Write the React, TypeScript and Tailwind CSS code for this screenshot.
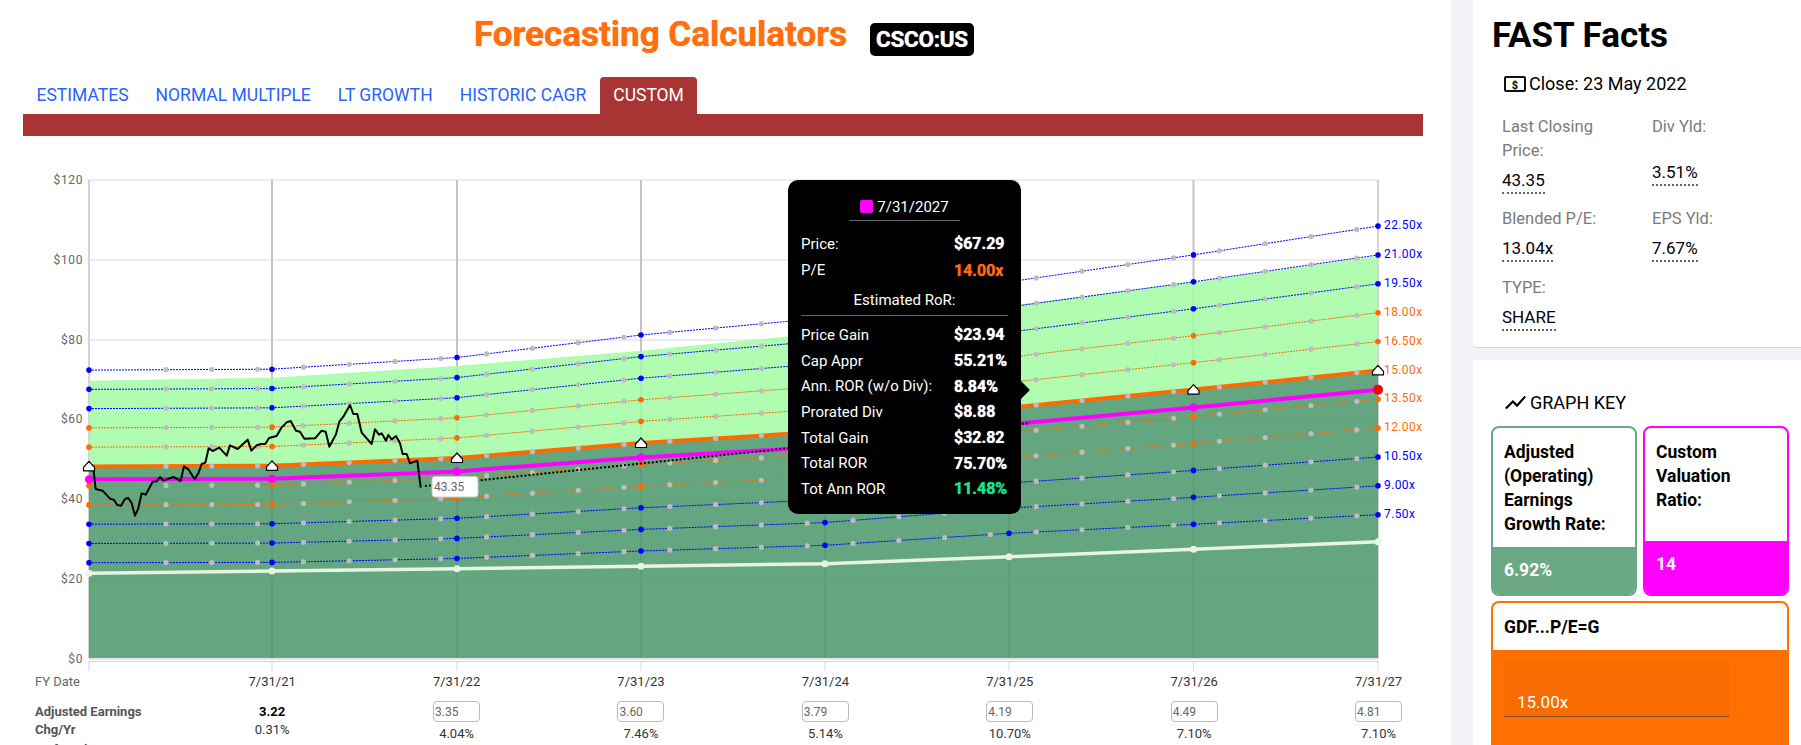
const xs = [89, 272, 457, 641, 825, 1009, 1193.5, 1378];
const eps = [3.21, 3.22, 3.35, 3.6, 3.79, 4.19, 4.49, 4.81];
const dates = ["7/31/21", "7/31/22", "7/31/23", "7/31/24", "7/31/25", "7/31/26", "7/31/27"];
const inputs = ["3.35", "3.60", "3.79", "4.19", "4.49", "4.81"];
const changes = ["4.04%", "7.46%", "5.14%", "10.70%", "7.10%", "7.10%"];
const BASE = 659;

const epsAt = (x: number) => {
  for (let i = 0; i < xs.length - 1; i++) {
    if (x <= xs[i + 1]) {
      return eps[i] + ((x - xs[i]) / (xs[i + 1] - xs[i])) * (eps[i + 1] - eps[i]);
    }
  }
  return eps[eps.length - 1];
};
const yFor = (pe: number, x: number) => BASE - epsAt(x) * pe * 4;
const peLine = (pe: number) => xs.map((x, i) => `${x},${BASE - eps[i] * pe * 4}`).join(" ");

const minor = Array.from({ length: 27 }, (_, i) => 166 + i * 45.8);
const multiples = [
  { pe: 22.5, c: "#0000ff", t: "22.50x" },
  { pe: 21, c: "#0000ff", t: "21.00x" },
  { pe: 19.5, c: "#0000ff", t: "19.50x" },
  { pe: 18, c: "#ff6a00", t: "18.00x" },
  { pe: 16.5, c: "#ff6a00", t: "16.50x" },
  { pe: 13.5, c: "#ff6a00", t: "13.50x" },
  { pe: 12, c: "#ff6a00", t: "12.00x" },
  { pe: 10.5, c: "#0000ff", t: "10.50x" },
  { pe: 9, c: "#0000ff", t: "9.00x" },
  { pe: 7.5, c: "#0000ff", t: "7.50x" },
];

const whiteY = [573.3, 571, 568.7, 566.3, 563.7, 556.7, 549.3, 541.7];
const greenTop = [380.7, 377.7, 366, 350.7, 333, 306, 282, 256];
const priceRaw = [
  100, 385, 107, 447, 128, 452, 150, 476, 162, 480, 172, 495, 183, 497, 195, 477, 205, 474, 215, 490, 225, 527, 235, 505,
  245, 460, 257, 464, 278, 425, 290, 424, 300, 411, 310, 422, 340, 411, 362, 423, 372, 379, 385, 388, 404, 418, 415, 400,
  425, 372, 436, 368, 446, 325, 458, 333, 478, 323, 500, 347, 510, 316, 533, 327, 563, 299, 574, 332, 590, 316, 604, 312,
  616, 312, 627, 294, 650, 288, 665, 262, 680, 247, 692, 243, 708, 272, 720, 275, 733, 296, 765, 295, 785, 272, 797, 275,
  808, 320, 828, 283, 838, 245, 850, 230, 870, 195, 880, 222, 892, 222, 905, 278, 935, 312, 945, 268, 957, 284, 965, 280,
  978, 302, 985, 285, 995, 298, 1008, 288, 1020, 310, 1028, 342, 1040, 342, 1050, 370, 1072, 362, 1082, 443,
];
const price = priceRaw
  .reduce<string[]>((acc, v, i) => {
    if (i % 2 === 0) acc.push(`${60 + v / 3},${340 + priceRaw[i + 1] / 3}`);
    return acc;
  }, [])
  .join(" ");

const Chart = () => {
  const top15 = xs.map((x, i) => `${x},${BASE - eps[i] * 60}`);
  const light = [...xs.map((x, i) => `${x},${greenTop[i]}`), ...[...top15].reverse()].join(" ");
  const dark = [...top15, `1378,658`, `89,658`].join(" ");
  return (
    <svg width="1451" height="505" viewBox="0 170 1451 505" className="block">
      {[180, 260, 340, 420, 500, 580].map((y) => (
        <line key={y} x1="89" x2="1378" y1={y} y2={y} stroke="#ececec" strokeWidth="2" />
      ))}
      {xs.map((x, i) => (
        <line key={x} x1={x} x2={x} y1="180" y2="658" stroke="#c4c4c4" strokeWidth={i === 0 || i === 7 ? 1.5 : 2} />
      ))}
      {["$120", "$100", "$80", "$60", "$40", "$20", "$0"].map((t, i) => (
        <text key={t} x="83" y={184 + i * 79.8} textAnchor="end" fontSize="12" letterSpacing="0.6" fill="#666">
          {t}
        </text>
      ))}
      <polygon points={light} fill="#a2fca2" fillOpacity="0.85" />
      <polygon points={dark} fill="#48966a" fillOpacity="0.85" />
      <line x1="89" x2="1378" y1="659" y2="659" stroke="#e6e6e6" strokeWidth="2" />
      <line x1="89" x2="1378" y1="661.5" y2="661.5" stroke="#ccd6eb" />
      {xs.map((x) => (
        <line key={x} x1={x} x2={x} y1="661" y2="671" stroke="#ccd6eb" />
      ))}
      {multiples.map((m) => (
        <g key={m.t}>
          <polyline points={peLine(m.pe)} fill="none" stroke={m.c} strokeWidth="1" strokeDasharray="2 1" />
          {minor.map((x) => (
            <circle key={x} cx={x} cy={yFor(m.pe, x)} r="2.6" fill="#bdbdbd" />
          ))}
          {xs.map((x, i) => (
            <circle key={x} cx={x} cy={BASE - eps[i] * m.pe * 4} r="2.8" fill={m.c} />
          ))}
          <text x="1384" y={BASE - eps[7] * m.pe * 4 + 3} fontSize="12" letterSpacing="0.4" fill={m.c}>
            {m.t}
          </text>
        </g>
      ))}
      <text x="1384" y={BASE - eps[7] * 60 + 4} fontSize="12" letterSpacing="0.4" fill="#ff6a00">
        15.00x
      </text>
      <polyline points={xs.map((x, i) => `${x},${whiteY[i]}`).join(" ")} fill="none" stroke="#e9f5e0" strokeWidth="3.5" />
      {xs.map((x, i) => (
        <circle key={x} cx={x} cy={whiteY[i]} r="3.5" fill="#e9f5e0" />
      ))}
      <polyline points={peLine(15)} fill="none" stroke="#ff6a00" strokeWidth="4" />
      {minor.map((x) => (
        <circle key={x} cx={x} cy={yFor(15, x)} r="2.6" fill="#bdbdbd" />
      ))}
      <polyline points={peLine(14)} fill="none" stroke="#ff00ff" strokeWidth="4" />
      {xs.map((x, i) => (
        <circle key={x} cx={x} cy={BASE - eps[i] * 56} r="4" fill="#ff00ff" />
      ))}
      <circle cx="1378" cy={BASE - eps[7] * 56} r="5" fill="#ff0000" />
      <line x1="425" y1="486" x2="1030" y2="423" stroke="#000" strokeWidth="2" strokeDasharray="2 2" />
      <polyline points={price} fill="none" stroke="#000" strokeWidth="2" strokeLinejoin="round" />
      {xs.map((x, i) => {
        const y = BASE - eps[i] * 60;
        return (
          <path
            key={x}
            d={`M${x - 5.5} ${y + 4.5} V${y + 1} L${x} ${y - 5} L${x + 5.5} ${y + 1} V${y + 4.5} Z`}
            fill="#fff"
            stroke="#000"
            strokeWidth="1.2"
            strokeLinejoin="round"
          />
        );
      })}
      <rect x="432" y="476.5" width="46" height="20.5" rx="3" fill="#fff" stroke="#ccc" />
      <text x="434" y="491" fontSize="12" fill="#666">
        43.35
      </text>
    </svg>
  );
};

const TipRow = ({ label, value, color }: { label: string; value: string; color?: string }) => (
  <div className="flex h-[25.67px] items-center">
    <span className="w-[153px] text-[15px]">{label}</span>
    <span className="text-[16px] font-bold [text-shadow:0_0_1px_currentColor]" style={color ? { color } : undefined}>
      {value}
    </span>
  </div>
);

const Tooltip = () => (
  <div className="absolute left-[788px] top-[180px] h-[334px] w-[233px] rounded-[10px] bg-black pl-[13px] pr-[13px] pt-[16px] text-white">
    <div className="absolute right-[-6px] top-[203px] h-[14px] w-[14px] rotate-45 bg-black" />
    <div className="mx-auto flex h-[24.5px] w-[111px] items-center justify-center gap-[4px] border-b border-[#666] pb-[2px] text-[15px]">
      <span className="h-[13px] w-[13px] rounded-[2px] bg-[#ff00ff]" />
      7/31/2027
    </div>
    <div className="mt-[10px]">
      <div className="flex h-[27px] items-center">
        <span className="w-[153px] text-[15px]">Price:</span>
        <span className="text-[16px] font-bold [text-shadow:0_0_1px_currentColor]">$67.29</span>
      </div>
      <div className="flex h-[26px] items-center">
        <span className="w-[153px] text-[15px]">P/E</span>
        <span className="text-[16px] font-bold text-[#ff6a13] [text-shadow:0_0_1px_currentColor]">14.00x</span>
      </div>
    </div>
    <div className="mt-[3px] flex h-[29px] items-center justify-center border-b border-[#666] text-[15px]">Estimated RoR:</div>
    <div className="mt-[7px]">
      <TipRow label="Price Gain" value="$23.94" />
      <TipRow label="Cap Appr" value="55.21%" />
      <TipRow label="Ann. ROR (w/o Div):" value="8.84%" />
      <TipRow label="Prorated Div" value="$8.88" />
      <TipRow label="Total Gain" value="$32.82" />
      <TipRow label="Total ROR" value="75.70%" />
      <TipRow label="Tot Ann ROR" value="11.48%" color="#14e88f" />
    </div>
  </div>
);

const Tabs = () => (
  <div className="ml-[23px] mt-[21px] flex h-[37px] w-[1400px] items-stretch text-[17.5px] text-[#2962ff]">
    {["ESTIMATES", "NORMAL MULTIPLE", "LT GROWTH", "HISTORIC CAGR"].map((t) => (
      <div key={t} className="flex items-center px-[13.5px]">
        {t}
      </div>
    ))}
    <div className="flex items-center rounded-t-[4px] bg-[#a83434] px-[13.5px] text-white">CUSTOM</div>
  </div>
);

const Fact = ({ label, value, h }: { label: string; value: string; h: string }) => (
  <div className={h}>
    <div className="text-[16.5px] leading-[24px] text-[#7b7b7b]">{label}</div>
    <div className="mt-[5px] inline-block border-b-2 border-dotted border-[#666] text-[17px] leading-[24px] text-black">{value}</div>
  </div>
);

const Sidebar = () => (
  <div className="flex w-[350px] flex-col gap-[12px] bg-[#f1f3f8] pl-[22px]">
    <div className="h-[348px] rounded-bl-[4px] border-b border-[#d8d8d8] bg-white pl-[19px]">
      <div className="pt-[15px] text-[35px] font-bold leading-[42px] text-black">FAST Facts</div>
      <div className="mt-[15px] flex items-center gap-[3px] pl-[12px] text-[18px] leading-[24px] text-black">
        <svg width="22" height="18" viewBox="0 0 22 18">
          <rect x="1" y="2" width="20" height="14" rx="1" fill="none" stroke="#111" strokeWidth="2" />
          <text x="11" y="13.5" textAnchor="middle" fontSize="11" fontWeight="900" fill="#111">
            $
          </text>
        </svg>
        Close: 23 May 2022
      </div>
      <div className="mt-[19px] grid w-[300px] grid-cols-[150px_150px] pl-[10px]">
        <Fact label="Last Closing Price:" value="43.35" h="h-[92px] w-[110px]" />
        <div className="h-[92px]">
          <div className="text-[16.5px] leading-[24px] text-[#7b7b7b]">Div Yld:</div>
          <div className="mt-[21px] inline-block border-b-2 border-dotted border-[#666] text-[17px] leading-[24px] text-black">3.51%</div>
        </div>
        <Fact label="Blended P/E:" value="13.04x" h="h-[69px]" />
        <Fact label="EPS Yld:" value="7.67%" h="h-[69px]" />
        <Fact label="TYPE:" value="SHARE" h="" />
      </div>
    </div>
    <div className="flex-1 overflow-hidden bg-white pl-[18px] pr-[12px]">
      <div className="flex h-[64px] items-center gap-[2px] pl-[12px] pt-[20px] text-[18px] text-black">
        <svg width="25" height="25" viewBox="0 0 24 24" fill="#000">
          <path d="M3.5 18.49l6-6.01 4 4L22 6.92l-1.41-1.41-7.09 7.97-4-4L2 16.99z" />
        </svg>
        GRAPH KEY
      </div>
      <div className="flex h-[172px] gap-[6px] pt-[2px]">
        <div className="flex w-[146px] flex-col overflow-hidden rounded-[8px] border-2 border-[#6aa984]">
          <div className="h-[119px] pl-[11px] pr-[20px] pt-[12px] text-[17.5px] font-bold leading-[24px] text-black">
            Adjusted (Operating) Earnings Growth Rate:
          </div>
          <div className="flex-1 bg-[#6aa984] px-[11px] pt-[10px] text-[17.5px] font-bold text-white">6.92%</div>
        </div>
        <div className="flex w-[146px] flex-col overflow-hidden rounded-[8px] border-2 border-[#ff00ff]">
          <div className="h-[113px] pl-[11px] pr-[20px] pt-[12px] text-[17.5px] font-bold leading-[24px] text-black">
            Custom Valuation Ratio:
          </div>
          <div className="flex-1 bg-[#ff00ff] px-[11px] pt-[10px] text-[17.5px] font-bold text-white">14</div>
        </div>
      </div>
      <div className="mt-[5px] w-[298px] overflow-hidden rounded-t-[8px] border-2 border-b-0 border-[#ff7000]">
        <div className="h-[47px] px-[11px] pt-[12px] text-[17.5px] font-bold leading-[24px] text-black">GDF...P/E=G</div>
        <div className="h-[100px] bg-[#ff7000] px-[11px] pt-[11px]">
          <div className="flex h-[56px] w-[225px] items-end rounded-t-[4px] border-b border-[#7a4a20] bg-[#f76b00] px-[13px] pb-[1px] text-[17px] leading-[26px] text-white">
            15.00x
          </div>
        </div>
      </div>
    </div>
  </div>
);

export default function App() {
  return (
    <div className="relative flex h-[745px] w-[1801px] overflow-hidden bg-white font-['Roboto',sans-serif]">
      <div className="w-[1451px]">
        <div className="flex h-[56px] items-end pl-[474px]">
          <h1 className="relative top-[5px] text-[35px] font-bold leading-[52px] text-[#ff6f0f] [text-shadow:0_0_1px_#ff6f0f]">
            Forecasting Calculators
          </h1>
          <span className="ml-[23px] rounded-[5px] bg-black px-[6px] text-[22.5px] font-bold leading-[33px] tracking-[-0.3px] text-white [text-shadow:0_0_1px_#fff]">
            CSCO:US
          </span>
        </div>
        <Tabs />
        <div className="ml-[23px] h-[22px] w-[1400px] bg-[#a83434]" />
        <div className="mt-[34px]">
          <Chart />
        </div>
        <div className="mt-[-3px] grid grid-cols-[145px_repeat(7,184.4px)] pl-[35px] text-[13px] leading-[20px] text-[#333]">
          <div className="text-[#666]">FY Date</div>
          {dates.map((d) => (
            <div key={d} className="text-center">
              {d}
            </div>
          ))}
          <div className="mt-[10px] font-bold text-[#555]">Adjusted Earnings</div>
          <div className="mt-[10px] text-center font-bold text-black">3.22</div>
          {inputs.map((v) => (
            <div key={v} className="mt-[9px] flex justify-center">
              <div className="h-[21px] w-[47px] rounded-[4px] border border-[#bbb] pl-[1px] text-[12px] leading-[20px] text-[#666]">{v}</div>
            </div>
          ))}
          <div className="-mt-[2px] font-bold text-[#555]">Chg/Yr</div>
          <div className="-mt-[2px] text-center">0.31%</div>
          {changes.map((v, i) => (
            <div key={i} className="mt-[2px] text-center">
              {v}
            </div>
          ))}
          <div className="-mt-[4px] font-bold text-[#555]"># of Analysts</div>
          <div className="-mt-[4px] text-center">24</div>
        </div>
      </div>
      <Tooltip />
      <Sidebar />
    </div>
  );
}
